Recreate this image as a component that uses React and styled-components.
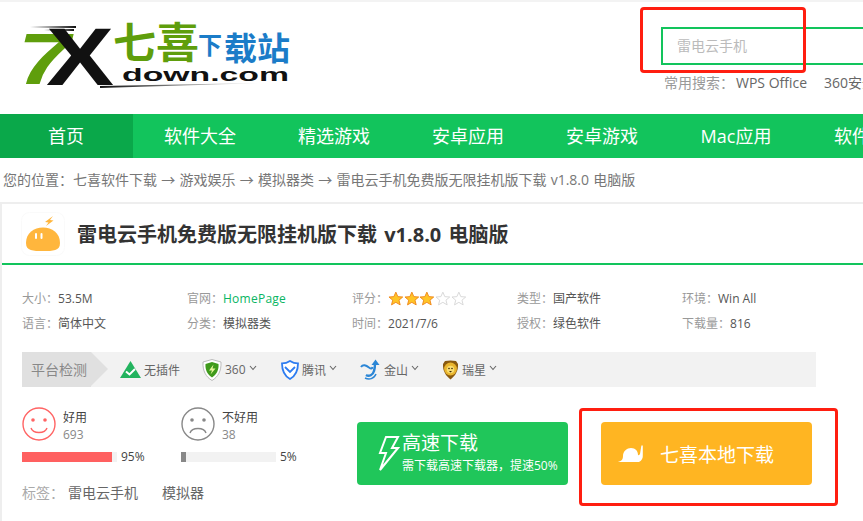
import React from 'react';
import styled, { createGlobalStyle } from 'styled-components';

const GlobalStyle = createGlobalStyle`
  html, body {
    margin: 0;
    padding: 0;
    background: #fff;
    overflow: hidden;
  }
  body {
    font-family: "Open Sans", "Noto Sans CJK SC", sans-serif;
  }
  * {
    box-sizing: border-box;
  }
`;

const Page = styled.div`
  position: relative;
  width: 863px;
  height: 521px;
  overflow: hidden;
  border-top: 2px solid #f3f3f3;
`;

const Header = styled.header`
  display: flex;
  height: 112px;
  padding-left: 24px;
`;

const LogoWrap = styled.svg`
  display: block;
  flex: none;
`;

const SearchArea = styled.div`
  flex: none;
  margin-left: 357px;
  padding-top: 25px;
  width: 400px;
`;

const SearchBox = styled.div`
  height: 38px;
  border: 2px solid #12c45c;
  padding-left: 14px;
  font-size: 14px;
  line-height: 34px;
  color: #bbb;
`;

const HotRow = styled.div`
  display: flex;
  margin: 9px 0 0 3px;
  font-size: 14px;
  line-height: 18px;
  color: #999;
  white-space: nowrap;
`;

const HotLink = styled.span`
  color: #666;
  margin-left: ${p => p.$gap}px;
`;

const Nav = styled.nav`
  display: flex;
  height: 44px;
  margin-left: -1px;
  background: #12c45c;
  overflow: hidden;
`;

const NavItem = styled.div`
  flex: none;
  width: 134px;
  text-align: center;
  font-size: 18px;
  line-height: 44px;
  color: #fff;
  background: ${p => (p.$active ? '#0aa84a' : 'transparent')};
`;

const Crumb = styled.div`
  padding-left: 3px;
  height: 44px;
  font-size: 14px;
  line-height: 44px;
  word-spacing: 0.6px;
  color: #777;
  white-space: nowrap;
`;

const Card = styled.section`
  border-top: 2px solid #eee;
  border-left: 2px solid #eee;
  height: 320px;
`;

const TitleBar = styled.div`
  display: flex;
  align-items: center;
  height: 61px;
  padding-left: 19px;
  border-bottom: 2px solid #12c45c;
`;

const AppIcon = styled.svg`
  flex: none;
  margin-right: 12px;
`;

const Title = styled.h1`
  margin: 2px 0 0;
  font-size: 20px;
  font-weight: 700;
  line-height: 28px;
  word-spacing: 2px;
  color: #333;
  white-space: nowrap;
`;

const InfoGrid = styled.div`
  display: grid;
  grid-template-columns: repeat(5, 165px);
  grid-auto-rows: 25px;
  padding: 21px 0 0 20px;
  font-size: 12px;
  line-height: 25px;
  color: #999;
`;

const InfoCell = styled.div`
  display: flex;
  align-items: center;
  white-space: nowrap;
`;

const InfoValue = styled.span`
  color: ${p => (p.$link ? '#09b562' : '#555')};
  letter-spacing: ${p => (p.$link ? '0.25px' : '0')};
`;

const CheckBar = styled.div`
  display: flex;
  align-items: center;
  width: 794px;
  height: 35px;
  margin: 16px 0 0 20px;
  background: #f2f2f2;
  font-size: 12px;
  color: #666;
`;

const CheckLabel = styled.div`
  position: relative;
  flex: none;
  width: 69px;
  height: 35px;
  margin-right: 29px;
  padding-left: 9px;
  background: #e0e0e0;
  font-size: 14px;
  line-height: 35px;
  color: #888;
  white-space: nowrap;

  &::after {
    content: '';
    position: absolute;
    left: 69px;
    top: 0;
    border-left: 17px solid #e0e0e0;
    border-top: 17.5px solid transparent;
    border-bottom: 17.5px solid transparent;
  }
`;

const CheckItem = styled.div`
  display: flex;
  align-items: center;
  flex: none;
  width: ${p => p.$width}px;
  white-space: nowrap;
`;

const CheckName = styled.span`
  margin-left: 3px;
`;

const Tick = styled.svg`
  margin-left: 3px;
  margin-top: -4px;
`;

const Lower = styled.div`
  display: flex;
  padding: 20px 0 0 20px;
`;

const VoteColumn = styled.div`
  flex: none;
  width: 335px;
`;

const Votes = styled.div`
  display: flex;
`;

const Vote = styled.div`
  flex: none;
  width: 159px;
`;

const VoteHead = styled.div`
  display: flex;
  align-items: center;
  height: 34px;
`;

const VoteText = styled.div`
  margin-left: 7px;
  padding-top: 3px;
  font-size: 12px;
  line-height: 17px;
  color: #444;
`;

const VoteCount = styled.div`
  color: #888;
`;

const BarRow = styled.div`
  display: flex;
  align-items: center;
  margin-top: 9px;
  font-size: 12px;
  line-height: 14px;
  color: #444;
`;

const BarTrack = styled.div`
  width: 95px;
  height: 10px;
  margin-right: 4px;
  background: #f2f2f2;
`;

const BarFill = styled.div`
  height: 100%;
  background: ${p => p.$color};
`;

const Tags = styled.div`
  display: flex;
  margin-top: 20px;
  font-size: 14px;
  line-height: 18px;
  color: #aaa;
`;

const Tag = styled.span`
  color: #666;
  margin-left: ${p => p.$gap}px;
`;

const Buttons = styled.div`
  display: flex;
  gap: 33px;
  padding-top: 15px;
`;

const DownloadButton = styled.div`
  display: flex;
  align-items: center;
  flex: none;
  width: 211px;
  height: 63px;
  border-radius: 4px;
  color: #fff;
  background: ${p => p.$color};
`;

const BoltIcon = styled.svg`
  flex: none;
  margin-left: 21px;
`;

const FastText = styled.div`
  margin-left: 2px;
`;

const FastTitle = styled.div`
  margin-bottom: 3px;
  font-size: 19px;
  line-height: 22px;
`;

const FastSub = styled.div`
  font-size: 12px;
  line-height: 18px;
  white-space: nowrap;
`;

const SnailIcon = styled.svg`
  flex: none;
  margin-left: 17px;
`;

const LocalText = styled.div`
  margin-left: 16px;
  font-size: 19px;
`;

const RedFrame = styled.div`
  position: absolute;
  left: ${p => p.$x}px;
  top: ${p => p.$y}px;
  width: ${p => p.$w}px;
  height: ${p => p.$h}px;
  border: 3px solid #ff1e10;
  border-radius: 4px;
`;

const Logo = () => (
  <LogoWrap width="280" height="112" viewBox="24 2 280 112">
    <defs>
      <linearGradient id="swoosh" x1="0" x2="1" y1="0" y2="0">
        <stop offset="0" stopColor="#111" />
        <stop offset="1" stopColor="#111" stopOpacity="0" />
      </linearGradient>
      <linearGradient id="speed" x1="0" x2="1" y1="0" y2="0">
        <stop offset="0" stopColor="#111" stopOpacity="0" />
        <stop offset="1" stopColor="#111" />
      </linearGradient>
    </defs>
    <rect x="30" y="26" width="46" height="2" fill="url(#speed)" />
    <rect x="44" y="29" width="30" height="2" fill="url(#speed)" />
    <polygon points="100,86 260,83 100,88" fill="url(#swoosh)" />
    <text x="18" y="84" fontFamily="Liberation Sans" fontWeight="700" fontStyle="italic" fontSize="72" fill="#5f9e0c" textLength="52" lengthAdjust="spacingAndGlyphs">7</text>
    <text x="46" y="85" fontFamily="Liberation Sans" fontWeight="700" fontSize="82" fill="#111" textLength="68" lengthAdjust="spacingAndGlyphs">X</text>
    <text x="113" y="58" fontFamily="Noto Sans CJK SC" fontWeight="700" fontSize="42" fill="#5f9e0c" textLength="86" lengthAdjust="spacingAndGlyphs">七喜</text>
    <text x="198" y="54" fontFamily="Noto Sans CJK SC" fontWeight="700" fontSize="24" fill="#1b7cc8" textLength="24" lengthAdjust="spacingAndGlyphs">下</text>
    <text x="224" y="60" fontFamily="Noto Sans CJK SC" fontWeight="700" fontSize="32" fill="#1b7cc8" textLength="66" lengthAdjust="spacingAndGlyphs">载站</text>
    <text x="122" y="81" fontFamily="Liberation Sans" fontWeight="700" fontSize="19" fill="#111" textLength="167" lengthAdjust="spacingAndGlyphs">down.com</text>
  </LogoWrap>
);

const SlimeIcon = () => (
  <AppIcon width="44" height="44" viewBox="0 0 44 44">
    <rect x="0.5" y="0.5" width="43" height="43" rx="8" fill="#fff" stroke="#fafafa" />
    <path d="M5 31 C5 21 13 15.5 22 15.5 C31 15.5 39 21 39 31 C39 39 32 39 22 39 C12 39 5 39 5 31 Z" fill="#ffb63d" />
    <path d="M32 4 L24 10 L27.5 10.5 L25 14 L32.5 8.5 L29 8 Z" fill="#ffb63d" />
    <rect x="14" y="21" width="2" height="6" rx="1" fill="#fff" />
    <rect x="19.5" y="21" width="2" height="6" rx="1" fill="#fff" />
  </AppIcon>
);

const Star = ({ on }) => (
  <svg width="15.7" height="15" viewBox="0 0 16 15">
    <path
      d="M8 1 L10 5.6 L15 6 L11.2 9.2 L12.4 14 L8 11.4 L3.6 14 L4.8 9.2 L1 6 L6 5.6 Z"
      fill={on ? '#ffc526' : '#fff'}
      stroke={on ? '#f08a1d' : '#d8d8d8'}
      strokeWidth="1"
    />
  </svg>
);

const PluginIcon = () => (
  <svg width="21" height="17" viewBox="0 0 21 17">
    <path d="M10.5 0 L21 17 H0 Z" fill="#22b35e" />
    <path d="M6 10.5 L9.5 13.5 L15 8" fill="none" stroke="#fff" strokeWidth="2" />
  </svg>
);

const Shield360 = () => (
  <svg width="20" height="22" viewBox="0 0 20 22">
    <path d="M10 0.5 L19 3 C19.5 12 16 18 10 21.5 C4 18 0.5 12 1 3 Z" fill="#fff" stroke="#bbb" />
    <path d="M10 3 L16.5 5 C17 11 14.5 15.5 10 18.5 C5.5 15.5 3 11 3.5 5 Z" fill="#3f9a1c" />
    <path d="M11.5 5.5 L7 11.5 H10 L8.5 15.5 L13.5 9.5 H10.5 Z" fill="#e6f59a" />
  </svg>
);

const TencentIcon = () => (
  <svg width="18" height="20" viewBox="0 0 18 20">
    <path d="M9 1 C6 3 3.5 3.4 1 3.4 C1 11 3 15.5 9 19 C15 15.5 17 11 17 3.4 C14.5 3.4 12 3 9 1 Z" fill="#fff" stroke="#2d7cf0" strokeWidth="1.8" />
    <path d="M4 7 L9 12 L14 7" fill="none" stroke="#2d7cf0" strokeWidth="1.8" />
  </svg>
);

const KingsoftIcon = () => (
  <svg width="21" height="21" viewBox="0 0 21 21">
    <path d="M1 8 C3 5 6 6 9 8.5 C11 10 12 10 12.5 8" fill="none" stroke="#2b86d6" strokeWidth="2" />
    <path d="M6 16 C9 18 13 16 14 12 C15 9 15 7 15 4" fill="none" stroke="#2b86d6" strokeWidth="2.4" />
    <path d="M15.5 0.5 L19.5 6 L11.5 6 Z" fill="#2b86d6" />
    <path d="M5 19 C9 21 14 20 16 15" fill="none" stroke="#2b86d6" strokeWidth="1.5" />
  </svg>
);

const RisingIcon = () => (
  <svg width="17" height="20" viewBox="0 0 17 20">
    <path d="M1 4 L3 1 L8.5 0.5 L14 1 L16 4 C16.5 11 13 16 8.5 19.5 C4 16 0.5 11 1 4 Z" fill="#8a5a10" />
    <circle cx="8.5" cy="9" r="6.4" fill="#e9b52e" />
    <circle cx="8.5" cy="9.5" r="3.8" fill="#f8dc70" />
    <circle cx="7" cy="8.5" r="0.8" fill="#3c2606" />
    <circle cx="10" cy="8.5" r="0.8" fill="#3c2606" />
    <path d="M7 11 H10 L8.5 12.5 Z" fill="#3c2606" />
  </svg>
);

const TickMark = () => (
  <Tick width="8" height="6" viewBox="0 0 8 6">
    <path d="M1 1 L4 4.5 L7 1" fill="none" stroke="#666" strokeWidth="1.1" />
  </Tick>
);

const Smile = ({ color, sad }) => (
  <svg width="34" height="34" viewBox="0 0 34 34">
    <circle cx="17" cy="17" r="16" fill="none" stroke={color} strokeWidth="1.4" />
    <circle cx="11" cy="13" r="1.8" fill={color} />
    <circle cx="23" cy="13" r="1.8" fill={color} />
    <path
      d={sad ? 'M9 26 C11 20 23 20 25 26' : 'M9 21 C11 27 23 27 25 21'}
      fill="none"
      stroke={color}
      strokeWidth="1.4"
    />
  </svg>
);

const Bolt = () => (
  <BoltIcon width="22" height="37" viewBox="0 0 22 37">
    <path d="M8 2 H20 L14 13 H20 L2 35 L8 18 H2 Z" fill="none" stroke="#fff" strokeWidth="2" />
  </BoltIcon>
);

const Snail = () => (
  <SnailIcon width="26" height="18" viewBox="0 0 26 18">
    <path d="M0 17 C3 16 5 15 5 11 C5 6 9 3 13 3 C17.5 3 20 6 20 10 C20.5 10.5 21.5 10 22 9 L23.4 0.5 L24.8 0.5 L24.8 10 C25 13 24 15.5 21 17 Z" fill="#fff" />
  </SnailIcon>
);

const navItems = ['首页', '软件大全', '精选游戏', '安卓应用', '安卓游戏', 'Mac应用', '软件专题'];

const App = () => {
  return (
    <Page>
      <GlobalStyle />
      <Header>
        <Logo />
        <SearchArea>
          <SearchBox>雷电云手机</SearchBox>
          <HotRow>
            常用搜索：
            <HotLink $gap={2}>WPS Office</HotLink>
            <HotLink $gap={17}>360安全卫士</HotLink>
          </HotRow>
        </SearchArea>
      </Header>
      <Nav>
        {navItems.map((item, i) => (
          <NavItem key={item} $active={i === 0}>{item}</NavItem>
        ))}
      </Nav>
      <Crumb>您的位置：七喜软件下载 → 游戏娱乐 → 模拟器类 → 雷电云手机免费版无限挂机版下载 v1.8.0 电脑版</Crumb>
      <Card>
        <TitleBar>
          <SlimeIcon />
          <Title>雷电云手机免费版无限挂机版下载 v1.8.0 电脑版</Title>
        </TitleBar>
        <InfoGrid>
          <InfoCell>大小：<InfoValue>53.5M</InfoValue></InfoCell>
          <InfoCell>官网：<InfoValue $link>HomePage</InfoValue></InfoCell>
          <InfoCell>
            评分：
            <Star on /><Star on /><Star on /><Star /><Star />
          </InfoCell>
          <InfoCell>类型：<InfoValue>国产软件</InfoValue></InfoCell>
          <InfoCell>环境：<InfoValue>Win All</InfoValue></InfoCell>
          <InfoCell>语言：<InfoValue>简体中文</InfoValue></InfoCell>
          <InfoCell>分类：<InfoValue>模拟器类</InfoValue></InfoCell>
          <InfoCell>时间：<InfoValue>2021/7/6</InfoValue></InfoCell>
          <InfoCell>授权：<InfoValue>绿色软件</InfoValue></InfoCell>
          <InfoCell>下载量：<InfoValue>816</InfoValue></InfoCell>
        </InfoGrid>
        <CheckBar>
          <CheckLabel>平台检测</CheckLabel>
          <CheckItem $width={82}><PluginIcon /><CheckName>无插件</CheckName></CheckItem>
          <CheckItem $width={79}><Shield360 /><CheckName>360</CheckName><TickMark /></CheckItem>
          <CheckItem $width={79}><TencentIcon /><CheckName>腾讯</CheckName><TickMark /></CheckItem>
          <CheckItem $width={82}><KingsoftIcon /><CheckName>金山</CheckName><TickMark /></CheckItem>
          <CheckItem $width={80}><RisingIcon /><CheckName>瑞星</CheckName><TickMark /></CheckItem>
        </CheckBar>
        <Lower>
          <VoteColumn>
            <Votes>
              <Vote>
                <VoteHead>
                  <Smile color="#ff6464" />
                  <VoteText>好用<VoteCount>693</VoteCount></VoteText>
                </VoteHead>
                <BarRow>
                  <BarTrack><BarFill $color="#ff6060" style={{ width: '95%' }} /></BarTrack>
                  95%
                </BarRow>
              </Vote>
              <Vote>
                <VoteHead>
                  <Smile color="#888" sad />
                  <VoteText>不好用<VoteCount>38</VoteCount></VoteText>
                </VoteHead>
                <BarRow>
                  <BarTrack><BarFill $color="#888" style={{ width: '5%' }} /></BarTrack>
                  5%
                </BarRow>
              </Vote>
            </Votes>
            <Tags>
              标签：
              <Tag $gap={4}>雷电云手机</Tag>
              <Tag $gap={24}>模拟器</Tag>
            </Tags>
          </VoteColumn>
          <Buttons>
            <DownloadButton $color="#20c65a">
              <Bolt />
              <FastText>
                <FastTitle>高速下载</FastTitle>
                <FastSub>需下载高速下载器，提速50%</FastSub>
              </FastText>
            </DownloadButton>
            <DownloadButton $color="#ffb522">
              <Snail />
              <LocalText>七喜本地下载</LocalText>
            </DownloadButton>
          </Buttons>
        </Lower>
      </Card>
      <RedFrame $x={640} $y={5} $w={166} $h={66} />
      <RedFrame $x={579} $y={406} $w={259} $h={98} />
    </Page>
  );
};

export default App;
